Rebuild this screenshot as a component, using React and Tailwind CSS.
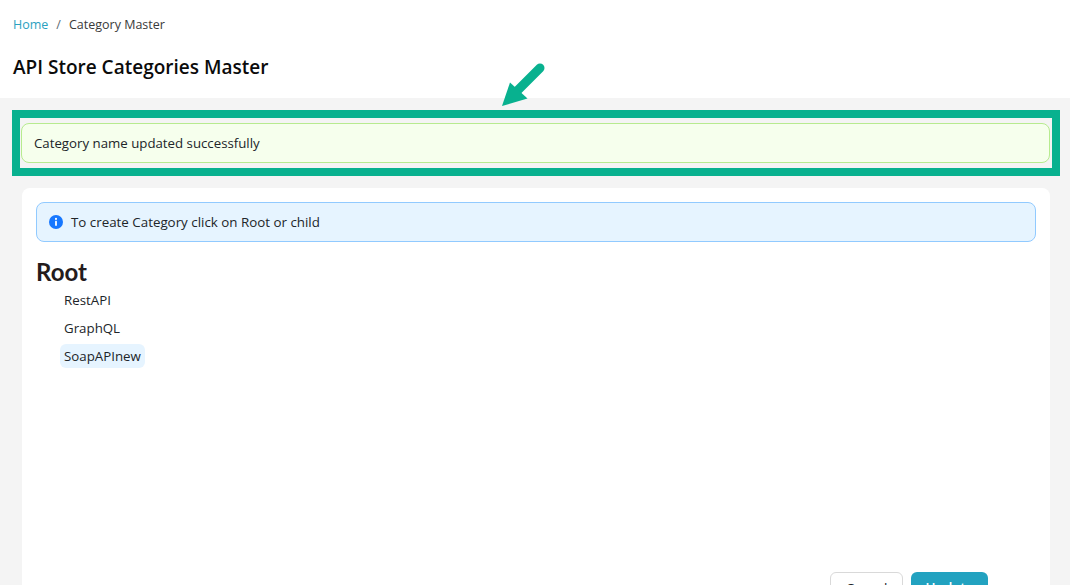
import React from 'react';

const categories = ['RestAPI', 'GraphQL', 'SoapAPInew'];

const App = () => {
  return (
    <div className="relative h-screen overflow-hidden bg-[#f4f4f4] font-['Open_Sans',sans-serif] text-[14px] text-[#212529]">
      <header className="h-[98px] bg-white px-[13px] pt-[15px]">
        <nav className="flex items-center h-[20px] text-[12.5px]">
          <a className="text-[#2ba1c0]">Home</a>
          <span className="mx-[8px] text-[#5c6b73]">/</span>
          <span className="text-[#3a3a3a]">Category Master</span>
        </nav>
        <h1 className="mt-[19px] text-[19px] leading-[26px] font-semibold text-[#0b0b0b]">API Store Categories Master</h1>
      </header>

      <main className="px-[20px] pt-[25px]">
        <div className="relative">
          <div className="ml-px w-[1029px] h-[40px] flex items-center px-[12px] pt-px rounded-[8px] border border-[#b7eb8f] bg-[#f6ffed] text-[13.25px]">
            Category name updated successfully
          </div>
          {/* annotation frame */}
          <div className="absolute left-[-8px] top-[-13px] w-[1048px] h-[66px] border-[8px] border-[#08b18f]"></div>
        </div>

        <section className="ml-[2px] mt-[25px] w-[1028px] h-[460px] rounded-[8px] bg-white px-[14px] pt-[14px]">
          <div className="flex items-center h-[40px] px-[12px] gap-[8px] rounded-[8px] border border-[#91caff] bg-[#e6f4ff] text-[13.35px]">
            <svg width="14" height="14" viewBox="0 0 14 14" className="shrink-0">
              <circle cx="7" cy="7" r="7" fill="#1677ff" />
              <rect x="6.1" y="5.8" width="1.8" height="5" rx="0.4" fill="#fff" />
              <circle cx="7" cy="3.9" r="1.05" fill="#fff" />
            </svg>
            To create Category click on Root or child
          </div>

          <div className="mt-[14px] font-['Lato',sans-serif] text-[24px] leading-[32px] font-bold text-[#241c1c]">Root</div>
          <ul className="ml-[24px] flex flex-col gap-[4px] items-start">
            {categories.map((name) => (
              <li
                key={name}
                className={`h-[24px] leading-[24px] px-[4px] rounded-[6px] text-[13.3px] ${name === 'SoapAPInew' ? 'bg-[#e6f4ff]' : ''}`}
              >
                {name}
              </li>
            ))}
          </ul>

          <div className="flex justify-end gap-[8px] pr-[48px] mt-[204px]">
            <button className="w-[73px] h-[36px] pb-[4px] rounded-[6px] border border-[#d9d9d9] bg-white text-[13.5px]">Cancel</button>
            <button className="w-[77px] h-[36px] pb-[4px] rounded-[6px] bg-[#22a2c0] text-white text-[13.5px] font-semibold">Update</button>
          </div>
        </section>
      </main>

      {/* annotation arrow */}
      <svg className="absolute left-[500px] top-[62px]" width="46" height="46" viewBox="0 0 46 46">
        <path d="M40 6 L17 29" stroke="#08b18f" strokeWidth="9" strokeLinecap="round" fill="none" />
        <path d="M2 44 L10 20.5 L27.5 36.5 Z" fill="#08b18f" />
      </svg>
    </div>
  );
};

export default App;
